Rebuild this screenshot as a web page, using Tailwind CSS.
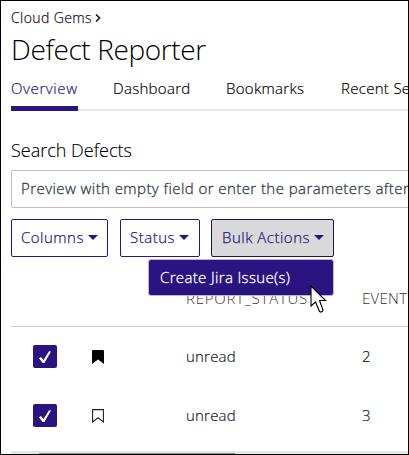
<!DOCTYPE html>
<html lang="en">
<head>
<meta charset="utf-8">
<title>Defect Reporter</title>
<script src="https://cdn.jsdelivr.net/npm/@tailwindcss/browser@4"></script>
</head>
<body class="font-['Open_Sans','Noto_Sans',sans-serif] bg-white text-[#16191f]">
<main class="relative flex h-[455px] w-[409px] flex-col overflow-hidden border border-black pl-[10px] whitespace-nowrap font-light">
  <nav class="flex h-[31px] shrink-0 items-center gap-1 pt-[2px] text-[14px] leading-5 tracking-[0.4px] [-webkit-text-stroke:0.25px]">
    <span>Cloud Gems</span>
    <svg class="-ml-px h-2 w-[6px]" viewBox="0 0 6 8" fill="none" stroke="currentColor" stroke-width="1.6"><path d="M1 .5 4.5 4 1 7.5"/></svg>
  </nav>
  <h1 class="h-[36px] shrink-0 text-[28px] leading-[34px] tracking-[-0.38px] text-black">Defect Reporter</h1>
  <div class="flex h-[43px] shrink-0 border-b-2 border-[#e6e6e6] text-[15px] leading-[40px] tracking-[0.3px] text-black [-webkit-text-stroke:0.2px]">
    <a class="h-[43px] w-[67px] shrink-0 border-b-[5px] border-[#2a1482] tracking-[0.6px] text-[#2a1482]">Overview</a>
    <a class="ml-[35px] w-[113px] shrink-0">Dashboard</a>
    <a class="w-[115px] shrink-0">Bookmarks</a>
    <a class="shrink-0">Recent Searches</a>
  </div>
  <h2 class="mt-[28px] h-[24px] shrink-0 text-[18px] leading-[22px] text-black [-webkit-text-stroke:0.15px]">Search Defects</h2>
  <div class="mt-[7px] h-[38px] w-[500px] shrink-0 rounded-[2px] border border-[#bfbfbf] pl-[9px] text-[15px] leading-[35px] tracking-[0.43px] text-[#323c49] [-webkit-text-stroke:0.3px]">Preview with empty field or enter the parameters after</div>
  <div class="mt-[11px] flex h-[38px] shrink-0 text-[15px] tracking-[0.5px] text-[#2a1482] [-webkit-text-stroke:0.25px]">
    <button class="flex w-[97px] items-center gap-1 rounded-[2px] border border-[#2a1482] pb-[2px] pl-[9px]"><span>Columns</span><svg class="h-[5px] w-[10px]" viewBox="0 0 10 5" fill="currentColor"><path d="M0 0h10L5 5z"/></svg></button>
    <button class="ml-3 flex w-[80px] items-center gap-1 rounded-[2px] border border-[#2a1482] pb-[2px] pl-[9px]"><span>Status</span><svg class="h-[5px] w-[10px]" viewBox="0 0 10 5" fill="currentColor"><path d="M0 0h10L5 5z"/></svg></button>
    <button class="ml-[11px] flex w-[123px] items-center gap-1 rounded-[2px] border border-[#21105f] bg-[#d9d9d9] pb-[2px] pl-[10px]"><span>Bulk Actions</span><svg class="h-[5px] w-[10px]" viewBox="0 0 10 5" fill="currentColor"><path d="M0 0h10L5 5z"/></svg></button>
  </div>
  <div class="flex h-[70px] shrink-0 border-b border-[#ccc] pt-[30px] pl-[175px] text-[15px] leading-[22px] tracking-[0.75px] text-[#333]">
    <span class="w-[176px] shrink-0">REPORT_STATUS</span><span class="tracking-[0.3px]">EVENTS</span>
  </div>
  <div class="flex h-[59px] shrink-0 items-center pl-[22px] text-[15px] tracking-[0.2px] [-webkit-text-stroke:0.2px]">
    <span class="flex h-[23px] w-6 items-center justify-center rounded-[2px] bg-[#2a1482]"><svg class="h-3.5 w-3.5" viewBox="0 0 14 14"><path d="M1 8.2 3 7 5.5 10 11 1.2 13 1.6 6.4 13 4.6 13Z" fill="white"/></svg></span>
    <svg class="ml-[35px] h-[14px] w-[12px]" viewBox="0 0 12 14"><path d="M0 1Q0 0 1 0H11Q12 0 12 1V14L6 9.5 0 14Z" fill="#050505"/></svg>
    <span class="ml-[82px] w-[176px]">unread</span><span>2</span>
  </div>
  <div class="flex h-[59px] shrink-0 items-center pl-[22px] text-[15px] tracking-[0.2px] [-webkit-text-stroke:0.2px]">
    <span class="flex h-[23px] w-6 items-center justify-center rounded-[2px] bg-[#2a1482]"><svg class="h-3.5 w-3.5" viewBox="0 0 14 14"><path d="M1 8.2 3 7 5.5 10 11 1.2 13 1.6 6.4 13 4.6 13Z" fill="white"/></svg></span>
    <svg class="ml-[35px] h-[14px] w-[12px]" viewBox="0 0 12 14"><path d="M.6.6H11.4V13L6 8.8.6 13Z" fill="none" stroke="#222" stroke-width="1.1"/></svg>
    <span class="ml-[82px] w-[176px]">unread</span><span>3</span>
  </div>
  <div class="absolute bottom-0 left-[10px] right-0 h-[3px] bg-[#e6e6e6]"><div class="absolute bottom-0 left-[28px] h-px w-[196px] bg-[#8c8c8c]"></div></div>
  <div class="absolute top-[258px] left-[147px] h-[37px] w-[186px] rounded-[3px] border border-[#bcb6d4] bg-[#2a1482] pl-[11px] text-[15px] leading-[34px] tracking-[0.35px] text-white [-webkit-text-stroke:0.3px]">Create Jira Issue(s)</div>
  <svg class="absolute top-[284px] left-[309px] h-7 w-[17px]" viewBox="0 0 17 28" fill="white" stroke="black" stroke-width="1.1"><path d="M1 1V21L5.5 17 9.5 26.5Q12 28 13 25L9.5 15.5H15.5Z"/></svg>
</main>
</body>
</html>
